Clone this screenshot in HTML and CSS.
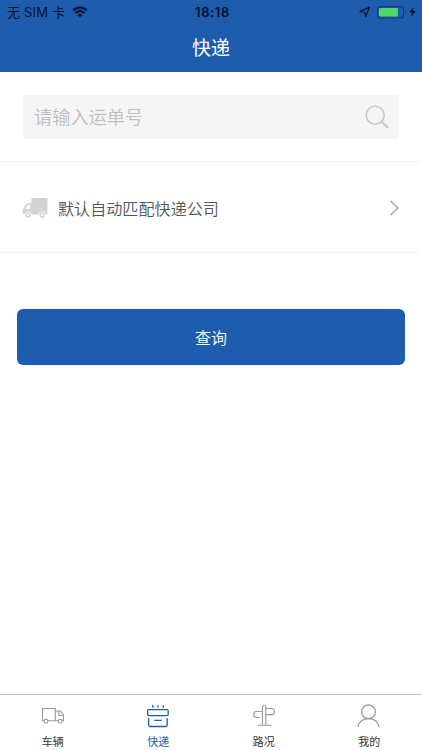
FILE: index.html
```html
<!DOCTYPE html>
<html lang="zh-CN">
<head>
<meta charset="utf-8">
<title>快递</title>
<link rel="stylesheet" href="styles.css">
</head>
<body>
<div class="screen">
  <header class="header">
    <div class="status">
      <div class="status-left">
        <span>无 SIM 卡</span>
        <svg class="wifi" width="16" height="12" viewBox="0 0 16 12" fill="none" stroke="#04102a" stroke-width="2.1">
          <path d="M1 4.2Q8-1.6 15 4.2"/>
          <path d="M3.5 7Q8 3.2 12.5 7"/>
          <path d="M5.6 8.7Q8 6.8 10.4 8.7L8 11.2Z" fill="#04102a" stroke="none"/>
        </svg>
      </div>
      <time class="clock">18:18</time>
      <div class="status-right">
        <svg width="12" height="12" viewBox="0 0 12 12" fill="none" stroke="#04102a" stroke-width="1.1" stroke-linejoin="round"><path d="M1 5.6 10.5 1 6.7 10.5 5.8 6.3Z"/></svg>
        <svg class="battery" width="30" height="13" viewBox="0 0 30 13"><rect x=".6" y=".6" width="26" height="11.4" rx="3" fill="none" stroke="#123c78" stroke-width="1.1"/><rect x="2" y="2" width="19" height="8.6" rx="1.3" fill="#4cd964"/><path d="M28 4.3Q29.6 6.3 28 8.3Z" fill="#123c78"/></svg>
        <svg class="bolt" width="7" height="10" viewBox="0 0 7 10" fill="#04102a"><path d="M4.6 0 .3 5.6H3L2 10 6.7 4.1H4Z"/></svg>
      </div>
    </div>
    <h1 class="title">快递</h1>
  </header>

  <section class="search">
    <div class="search-box">
      <span>请输入运单号</span>
      <svg width="24" height="24" viewBox="0 0 24 24" fill="none" stroke="#c8c8c8" stroke-width="1.6"><circle cx="10.2" cy="10.2" r="9"/><path d="m16.7 16.7 6.3 6.3" stroke-width="2"/></svg>
    </div>
  </section>

  <section class="company">
    <svg width="26" height="20" viewBox="0 0 26 20">
      <path fill="#d3d3d3" fill-rule="evenodd" d="M9.5 0H25.5V16.5H.7V12.5L1.5 10.3 4.3 6Q5 5 6.2 5H9.5ZM8 6.8H6.3Q5.6 6.8 5.3 7.4L3.2 11H8Z"/>
      <g fill="#fff" stroke="#fff" stroke-width="2.6"><circle cx="6.2" cy="17" r="2.2"/><circle cx="20.2" cy="17" r="2.2"/></g>
      <g fill="#fff" stroke="#d3d3d3" stroke-width="1.5"><circle cx="6.2" cy="17" r="1.9"/><circle cx="20.2" cy="17" r="1.9"/></g>
    </svg>
    <span class="company-name">默认自动匹配快递公司</span>
    <svg width="9" height="16" viewBox="0 0 9 16" fill="none" stroke="#999" stroke-width="1.2"><path d="m.7 1 7.3 7-7.3 7"/></svg>
  </section>

  <main class="content">
    <button class="query">查询</button>
  </main>

  <nav class="tabs">
    <div class="tab">
      <svg width="24" height="24" viewBox="0 0 24 24" fill="none" stroke="#999" stroke-width="1.1">
        <path d="M3 16.7H1.5V4.5h12.8v12.2H7M14.3 7h5.2l3 4v5.7h-1.3M17.2 16.7H14.3M17.8 7v4.5h4.7"/>
        <circle cx="5" cy="17.3" r="1.9"/><circle cx="19.2" cy="17.3" r="1.9"/>
      </svg>
      <span>车辆</span>
    </div>
    <div class="tab active">
      <svg width="24" height="24" viewBox="0 0 24 24" fill="none" stroke="#1e5dad" stroke-width="1.3">
        <rect x="1.6" y="5.6" width="20.6" height="6" rx="1.3"/>
        <path d="M2.6 14v7q0 1.5 1.5 1.5h15.6q1.5 0 1.5-1.5v-7M8.3 16.4h7.5M6.6 1.2l.4 2.6M12 1.2v2.6M17.4 1.2l-.4 2.6"/>
      </svg>
      <span>快递</span>
    </div>
    <div class="tab">
      <svg width="24" height="24" viewBox="0 0 24 24" fill="none" stroke="#999" stroke-width="1.1">
        <path d="M10.4 21.3V3.2a1.7 1.7 0 0 1 3.4 0V21.3M5.5 21.3h14M13.8 4.5h5.6a3 3 0 0 1 0 6.1h-5.6M10.4 7.5H4.6a3 3 0 0 0 0 6h3.2"/>
      </svg>
      <span>路况</span>
    </div>
    <div class="tab">
      <svg width="24" height="24" viewBox="0 0 24 24" fill="none" stroke="#999" stroke-width="1.3">
        <circle cx="11.5" cy="7.8" r="6.9"/><path d="M.9 23C1.7 17.6 6.3 14.7 11.5 14.7S21.3 17.6 22.1 23"/>
      </svg>
      <span>我的</span>
    </div>
  </nav>
</div>
</body>
</html>
```
FILE: styles.css
```css
* {
  box-sizing: border-box;
}

body {
  margin: 0;
  background: #fff;
  font-family: "Liberation Sans", "Noto Sans CJK SC", sans-serif;
}

svg {
  display: block;
  flex: none;
}

.screen {
  display: flex;
  flex-direction: column;
  height: 750px;
}

.header {
  height: 72px;
  background: #1e5dad;
}

.status {
  display: grid;
  grid-template-columns: 1fr auto 1fr;
  align-items: center;
  height: 24px;
  padding: 0 6px 0 7px;
  color: #04102a;
  font-family: Inter, "Noto Sans CJK SC", sans-serif;
  font-size: 13px;
  line-height: 24px;
}

.status-left,
.status-right {
  display: flex;
  align-items: center;
}

.status-left {
  gap: 7px;
  letter-spacing: 0.2px;
}

.status-right {
  justify-content: flex-end;
}

.battery {
  margin-left: 6px;
}

.bolt {
  margin-left: 2px;
}

.clock {
  padding-left: 2px;
  font-weight: 600;
  letter-spacing: 0.6px;
}

.title {
  margin: 0;
  padding-top: 2px;
  color: #fff;
  font-size: 19px;
  font-weight: 400;
  line-height: 46px;
  text-align: center;
}

.search {
  height: 90px;
  padding: 23px 23px 0;
  border-bottom: 1px solid #f1f1f1;
}

.search-box {
  display: flex;
  align-items: center;
  justify-content: space-between;
  height: 44px;
  padding: 0 10px 0 11px;
  border-radius: 4px;
  background: #f5f5f5;
  color: #bebec3;
  font-size: 18.2px;
  font-weight: 350;
}

.search-box span {
  padding-bottom: 2px;
}

.company {
  display: flex;
  align-items: center;
  height: 91px;
  padding: 1px 23px 0 22px;
  border-bottom: 1px solid #f1f1f1;
}

.company-name {
  flex: 1;
  margin-left: 10px;
  color: #555;
  font-size: 16.1px;
  font-weight: 350;
}

.content {
  flex: 1;
  padding: 56px 17px 0;
}

.query {
  display: block;
  width: 100%;
  height: 56px;
  padding: 0;
  border: 0;
  border-radius: 6px;
  background: #1e5dad;
  color: #fff;
  font: inherit;
  font-size: 16px;
  font-weight: 350;
}

.tabs {
  display: grid;
  grid-template-columns: repeat(4, 1fr);
  height: 56px;
  border-top: 1px solid #c4c4c4;
}

.tab {
  display: flex;
  flex-direction: column;
  align-items: center;
  gap: 6px;
  padding-top: 9px;
  color: #333;
  font-size: 11px;
  font-weight: 400;
  line-height: 16px;
}

.active {
  color: #1e5dad;
}
```
